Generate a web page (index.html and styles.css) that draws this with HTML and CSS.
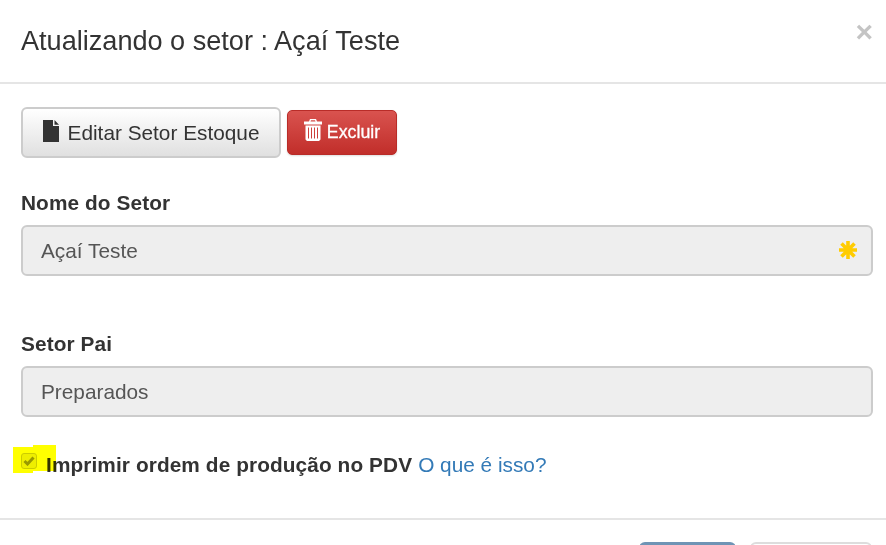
FILE: index.html
```html
<!DOCTYPE html>
<html lang="pt-BR">
<head>
  <meta charset="UTF-8">
  <title>Atualizando o setor</title>
  <link rel="stylesheet" href="styles.css">
</head>
<body>
  <div class="modal">
    <div class="modal-header">
      <h4 class="modal-title">Atualizando o setor : Açaí Teste</h4>
      <span class="close">×</span>
    </div>
    <div class="modal-body">
      <div class="actions">
        <button class="btn btn-default">
          <svg class="icon-file" viewBox="0 0 16 22"><path d="M0 0h10v6h6v16H0z"/><path d="M11.500 0L16 4.700h-4.500z"/></svg>
          Editar Setor Estoque
        </button>
        <button class="btn btn-danger">
          <svg class="icon-trash" viewBox="0 0 18 22"><path fill-rule="evenodd" d="M6 0h6l1 2.500h5V5.500H0V2.500h5zM7 1.200l-.5 1.300h5l-.5-1.300zM1.500 6.500h15v14l-1.500 1.500H3l-1.500-1.500zM4 8.500v11h1v-11zM7 8.500v11h1v-11zM10 8.500v11h1v-11zM13 8.500v11h1v-11z"/></svg>
          Excluir
        </button>
      </div>
      <div class="form-group">
        <label>Nome do Setor</label>
        <div class="input-wrap">
          <div class="form-control">Açaí Teste</div>
          <svg class="required" viewBox="0 0 18 18"><path d="M9 0v18M0 9h18M2.500 2.500l13 13M2.500 15.500l13-13" stroke="#fc0" stroke-width="3.600"/></svg>
        </div>
      </div>
      <div class="form-group">
        <label>Setor Pai</label>
        <div class="form-control">Preparados</div>
      </div>
      <div class="check-row">
        <span class="checkbox"><svg viewBox="0 0 12 10"><path d="M1.500 5l3 3 6-6.500" fill="none" stroke="#999" stroke-width="3"/></svg></span>
        <b>Imprimir ordem de produção no PDV</b> <a href="#">O que é isso?</a>
        <span class="marker"></span>
      </div>
    </div>
    <div class="modal-footer">
      <span class="btn-cut btn-blue"></span>
      <span class="btn-cut btn-gray"></span>
    </div>
  </div>
</body>
</html>
```

FILE: styles.css
```css
html, body { margin:0; padding:0; height:100%; overflow:hidden; }
body { background:#fff; font-family:"Liberation Sans", Arial, sans-serif; color:#333; font-size:20.800px; }

.modal { height:545px; overflow:hidden; }
.modal-header { position:relative; height:82px; border-bottom:2px solid #e5e5e5; }
.modal-title { margin:0; padding:23px 21px 0 21px; font-size:27.100px; font-weight:400; line-height:36px; }
.close { position:absolute; right:13px; top:14px; font-size:30px; line-height:36px; font-weight:700; color:#c4c4c4; }

.modal-body { padding:23px 13px 0 21px; height:434px; box-sizing:border-box; }
.actions { display:flex; align-items:center; gap:6px; height:51px; }
.btn { font-family:inherit; box-sizing:border-box; display:flex; align-items:center; justify-content:center; }
.btn-default { width:260px; height:51px; font-size:20.800px; color:#333; border:2px solid #ccc; border-radius:6px; background:linear-gradient(#fff, #e0e0e0); gap:9px; padding:0; }
.btn-danger { width:110px; height:45px; font-size:17.800px; color:#fff; -webkit-text-stroke:.3px #fff; border:1px solid #b92c28; border-radius:5px; background:linear-gradient(#d9534f, #c12e2a); gap:5px; padding:0 0 1px 0; box-shadow:0 1px 2px #0002; }
.icon-file { width:16px; height:22px; fill:#333; margin-bottom:3px; }
.icon-trash { width:18px; height:22px; fill:#fff; margin-bottom:5px; }

.form-group { height:141px; }
.form-group label { display:block; font-weight:700; line-height:28px; letter-spacing:.1px; margin-bottom:8px; }
.actions + .form-group { margin-top:31px; }
.form-control { box-sizing:border-box; height:51px; line-height:47px; padding:0 18px; color:#555; background:#eee; border:2px solid #ccc; border-radius:6px; }
.input-wrap { position:relative; }
.required { position:absolute; right:16px; top:16px; width:18px; height:18px; }

.form-group + .form-group { height:auto; }
.check-row { position:relative; display:flex; align-items:center; margin-top:34px; height:28px; line-height:28px; white-space:pre; }
.check-row b { margin-left:9px; letter-spacing:.1px; }
.check-row a { color:#337ab7; text-decoration:none; margin-left:6px; }
.checkbox { box-sizing:border-box; width:16px; height:16px; flex:none; margin-bottom:9px; background:#eee; border:1.500px solid #ccc; border-radius:3px; display:flex; align-items:center; justify-content:center; }
.checkbox svg { width:12px; height:10px; }
.marker { position:absolute; left:-8px; top:-6px; width:43px; height:28px; background:#ff0; mix-blend-mode:multiply; clip-path:polygon(0 2px, 20px 2px, 20px 0, 43px 0, 43px 26px, 20px 26px, 20px 28px, 0 28px); }

.modal-footer { border-top:2px solid #e5e5e5; display:flex; justify-content:flex-end; gap:14px; padding:22px 14px 0 0; }
.btn-cut { display:block; height:40px; box-sizing:border-box; border-radius:6px 6px 0 0; }
.btn-blue { width:97px; background:#6f94b5; }
.btn-gray { width:122px; background:#fff; border:2px solid #ddd; }
```
